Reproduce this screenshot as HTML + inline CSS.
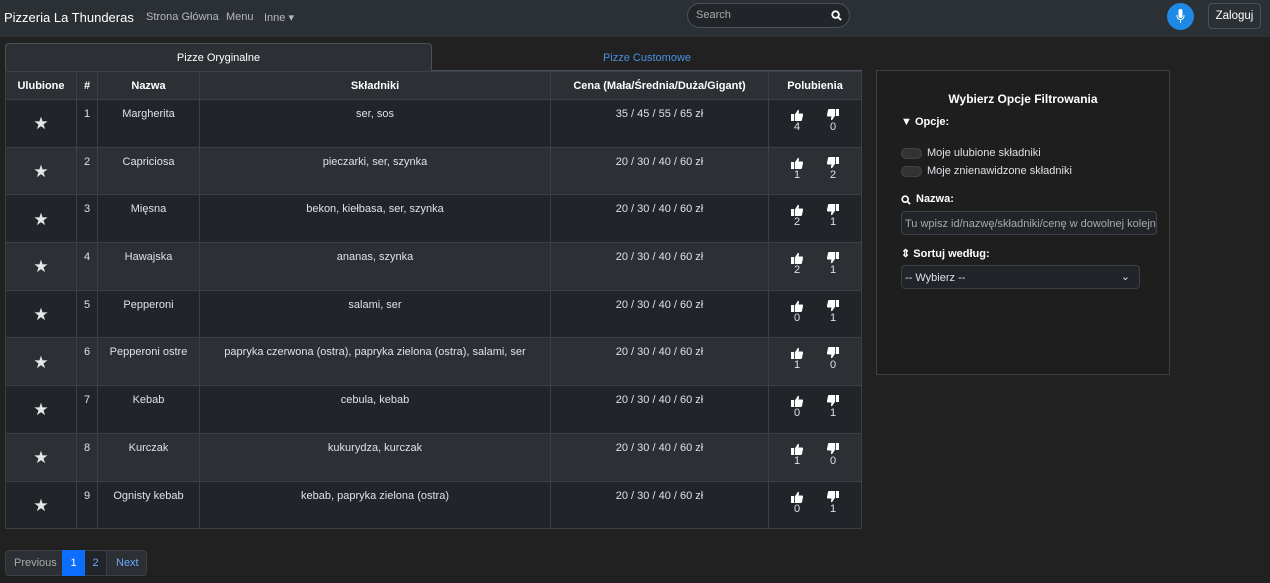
<!DOCTYPE html><html><head><meta charset="utf-8"><style>
*{box-sizing:border-box;margin:0;padding:0}
body{width:1270px;height:583px;background:#212121;font-family:"Liberation Sans",sans-serif;color:#dee2e6;font-size:11px;position:relative;overflow:hidden}
.nav{position:absolute;left:0;top:0;width:1270px;height:37px;background:#2b3035}
.a{position:absolute}
table{position:absolute;left:5px;top:71px;border-collapse:collapse;table-layout:fixed}
td,th{border:1px solid #3b4046;text-align:center;vertical-align:top;font-size:11px}
th{height:28px;vertical-align:middle;font-weight:bold;color:#fff;background:#2c3034}
td{height:47.7px;padding-top:8px}
tr:nth-child(odd) td{background:#2c3034}
tr:nth-child(even) td{background:#212529}
td.s{vertical-align:middle;padding:2px 0 0;font-size:17px;color:#e6e6e6}
td.n{text-align:left;padding-left:8px}
.v{display:inline-block;width:36px;text-align:center;line-height:13px}
.v svg{display:block;margin:1px auto 0}
</style></head><body>
<svg width="0" height="0" style="position:absolute"><defs>
<symbol id="up" viewBox="0 0 12 12"><rect x="0" y="5" width="3" height="7" fill="#fff"/><path d="M3.8 5.5L6.5 1.5C7 0.5 8 0.7 8 1.8L7.6 4.5H11C11.8 4.5 12.2 5.2 12 6L11 11C10.8 11.6 10.4 12 9.8 12H3.8Z" fill="#fff"/></symbol>
<symbol id="dn" viewBox="0 0 12 12"><g transform="rotate(180 6 6)"><rect x="0" y="5" width="3" height="7" fill="#fff"/><path d="M3.8 5.5L6.5 1.5C7 0.5 8 0.7 8 1.8L7.6 4.5H11C11.8 4.5 12.2 5.2 12 6L11 11C10.8 11.6 10.4 12 9.8 12H3.8Z" fill="#fff"/></g></symbol>
</defs></svg>
<div class="nav">
<div class="a" style="left:4px;top:10px;font-size:13px;color:#fff">Pizzeria La Thunderas</div>
<div class="a" style="left:146px;top:11px;color:#b5b8bb">Strona Główna</div>
<div class="a" style="left:226px;top:11px;color:#b5b8bb">Menu</div>
<div class="a" style="left:264px;top:11px;color:#b5b8bb">Inne ▾</div>
<div class="a" style="left:687px;top:3px;width:163px;height:25px;border:1px solid #495057;border-radius:13px;background:#212529"><span class="a" style="left:8px;top:5px;color:#aaa">Search</span>
<svg class="a" style="left:143px;top:6px" width="11" height="11" viewBox="0 0 12 12"><circle cx="5" cy="5" r="3.6" fill="none" stroke="#fff" stroke-width="2"/><path d="M7.5 7.5L11 11" stroke="#fff" stroke-width="2"/></svg></div>
<div class="a" style="left:1167px;top:3px;width:27px;height:27px;border-radius:50%;background:#1e88e5"><svg class="a" style="left:9px;top:6px" width="9" height="15" viewBox="0 0 9 15"><rect x="2.5" y="0" width="4" height="9" rx="2" fill="#fff"/><path d="M1 6v1a3.5 3.5 0 0 0 7 0V6M4.5 11v3" stroke="#fff" fill="none"/></svg></div>
<div class="a" style="left:1208px;top:3px;width:53px;height:26px;border:1px solid #495057;border-radius:4px;color:#fff;font-size:11.5px;text-align:center;line-height:24px">Zaloguj</div>
</div>
<div class="a" style="left:5px;top:43px;width:427px;height:28px;border:1px solid #495057;border-bottom:none;border-radius:4px 4px 0 0;background:#2c3034;text-align:center;line-height:28px;color:#fff">Pizze Oryginalne</div>
<div class="a" style="left:432px;top:70px;width:430px;height:1px;background:#495057"></div>
<div class="a" style="left:432px;top:44px;width:430px;text-align:center;line-height:28px;color:#4a90e2">Pizze Customowe</div>
<table>
<colgroup><col style="width:71px"><col style="width:21px"><col style="width:102px"><col style="width:351px"><col style="width:218px"><col style="width:93px"></colgroup>
<tr><th>Ulubione</th><th>#</th><th>Nazwa</th><th>Składniki</th><th>Cena (Mała/Średnia/Duża/Gigant)</th><th>Polubienia</th></tr>
<tr><td class="s">★</td><td>1</td><td>Margherita</td><td>ser, sos</td><td>35 / 45 / 55 / 65 zł</td><td><span class="v"><svg width="12" height="12"><use href="#up"/></svg>4</span><span class="v"><svg width="12" height="12"><use href="#dn"/></svg>0</span></td></tr>
<tr><td class="s">★</td><td>2</td><td>Capriciosa</td><td>pieczarki, ser, szynka</td><td>20 / 30 / 40 / 60 zł</td><td><span class="v"><svg width="12" height="12"><use href="#up"/></svg>1</span><span class="v"><svg width="12" height="12"><use href="#dn"/></svg>2</span></td></tr>
<tr><td class="s">★</td><td>3</td><td>Mięsna</td><td>bekon, kiełbasa, ser, szynka</td><td>20 / 30 / 40 / 60 zł</td><td><span class="v"><svg width="12" height="12"><use href="#up"/></svg>2</span><span class="v"><svg width="12" height="12"><use href="#dn"/></svg>1</span></td></tr>
<tr><td class="s">★</td><td>4</td><td>Hawajska</td><td>ananas, szynka</td><td>20 / 30 / 40 / 60 zł</td><td><span class="v"><svg width="12" height="12"><use href="#up"/></svg>2</span><span class="v"><svg width="12" height="12"><use href="#dn"/></svg>1</span></td></tr>
<tr><td class="s">★</td><td>5</td><td>Pepperoni</td><td>salami, ser</td><td>20 / 30 / 40 / 60 zł</td><td><span class="v"><svg width="12" height="12"><use href="#up"/></svg>0</span><span class="v"><svg width="12" height="12"><use href="#dn"/></svg>1</span></td></tr>
<tr><td class="s">★</td><td>6</td><td>Pepperoni ostre</td><td>papryka czerwona (ostra), papryka zielona (ostra), salami, ser</td><td>20 / 30 / 40 / 60 zł</td><td><span class="v"><svg width="12" height="12"><use href="#up"/></svg>1</span><span class="v"><svg width="12" height="12"><use href="#dn"/></svg>0</span></td></tr>
<tr><td class="s">★</td><td>7</td><td>Kebab</td><td>cebula, kebab</td><td>20 / 30 / 40 / 60 zł</td><td><span class="v"><svg width="12" height="12"><use href="#up"/></svg>0</span><span class="v"><svg width="12" height="12"><use href="#dn"/></svg>1</span></td></tr>
<tr><td class="s">★</td><td>8</td><td>Kurczak</td><td>kukurydza, kurczak</td><td>20 / 30 / 40 / 60 zł</td><td><span class="v"><svg width="12" height="12"><use href="#up"/></svg>1</span><span class="v"><svg width="12" height="12"><use href="#dn"/></svg>0</span></td></tr>
<tr><td class="s">★</td><td>9</td><td>Ognisty kebab</td><td>kebab, papryka zielona (ostra)</td><td>20 / 30 / 40 / 60 zł</td><td><span class="v"><svg width="12" height="12"><use href="#up"/></svg>0</span><span class="v"><svg width="12" height="12"><use href="#dn"/></svg>1</span></td></tr>
</table>
<div class="a" style="left:876px;top:70px;width:294px;height:305px;border:1px solid #3b4046;background:#1e1e1e">
<div class="a" style="left:0;top:21px;width:292px;text-align:center;font-weight:bold;font-size:12px;color:#fff">Wybierz Opcje Filtrowania</div>
<div class="a" style="left:24px;top:45px;font-weight:bold;color:#fff">▼ Opcje:</div>
<div class="a" style="left:24px;top:77px;width:21px;height:11px;border-radius:6px;background:#333;border:1px solid #444"></div>
<div class="a" style="left:50px;top:76px">Moje ulubione składniki</div>
<div class="a" style="left:24px;top:95px;width:21px;height:11px;border-radius:6px;background:#333;border:1px solid #444"></div>
<div class="a" style="left:50px;top:94px">Moje znienawidzone składniki</div>
<svg class="a" style="left:24px;top:124px" width="10" height="10" viewBox="0 0 12 12"><circle cx="5" cy="5" r="3.6" fill="none" stroke="#fff" stroke-width="2"/><path d="M7.5 7.5L11 11" stroke="#fff" stroke-width="2"/></svg>
<div class="a" style="left:39px;top:122px;font-weight:bold;color:#fff">Nazwa:</div>
<div class="a" style="left:24px;top:140px;width:256px;height:24px;border:1px solid #3b4046;border-radius:4px;background:#212529;color:#aaa;padding:6px 3px;white-space:nowrap;overflow:hidden">Tu wpisz id/nazwę/składniki/cenę w dowolnej kolejn</div>
<div class="a" style="left:24px;top:176px;font-weight:bold;color:#fff">⇕ Sortuj według:</div>
<div class="a" style="left:24px;top:194px;width:239px;height:24px;border:1px solid #3b4046;border-radius:4px;background:#212529;padding:6px 3px">-- Wybierz --<span class="a" style="right:9px;top:4px">⌄</span></div>
</div>
<div class="a" style="left:5px;top:550px;width:142px;height:26px;border:1px solid #3b4046;border-radius:4px;background:#2c3034"></div>
<div class="a" style="left:14px;top:557px;color:#aaa">Previous</div>
<div class="a" style="left:62px;top:550px;width:23px;height:26px;background:#0d6efd;color:#fff;text-align:center;line-height:26px">1</div>
<div class="a" style="left:85px;top:551px;width:22px;height:24px;background:#212529;border-right:1px solid #3b4046;color:#6ea8fe;text-align:center;line-height:24px">2</div>
<div class="a" style="left:116px;top:557px;color:#6ea8fe">Next</div>
</body></html>
